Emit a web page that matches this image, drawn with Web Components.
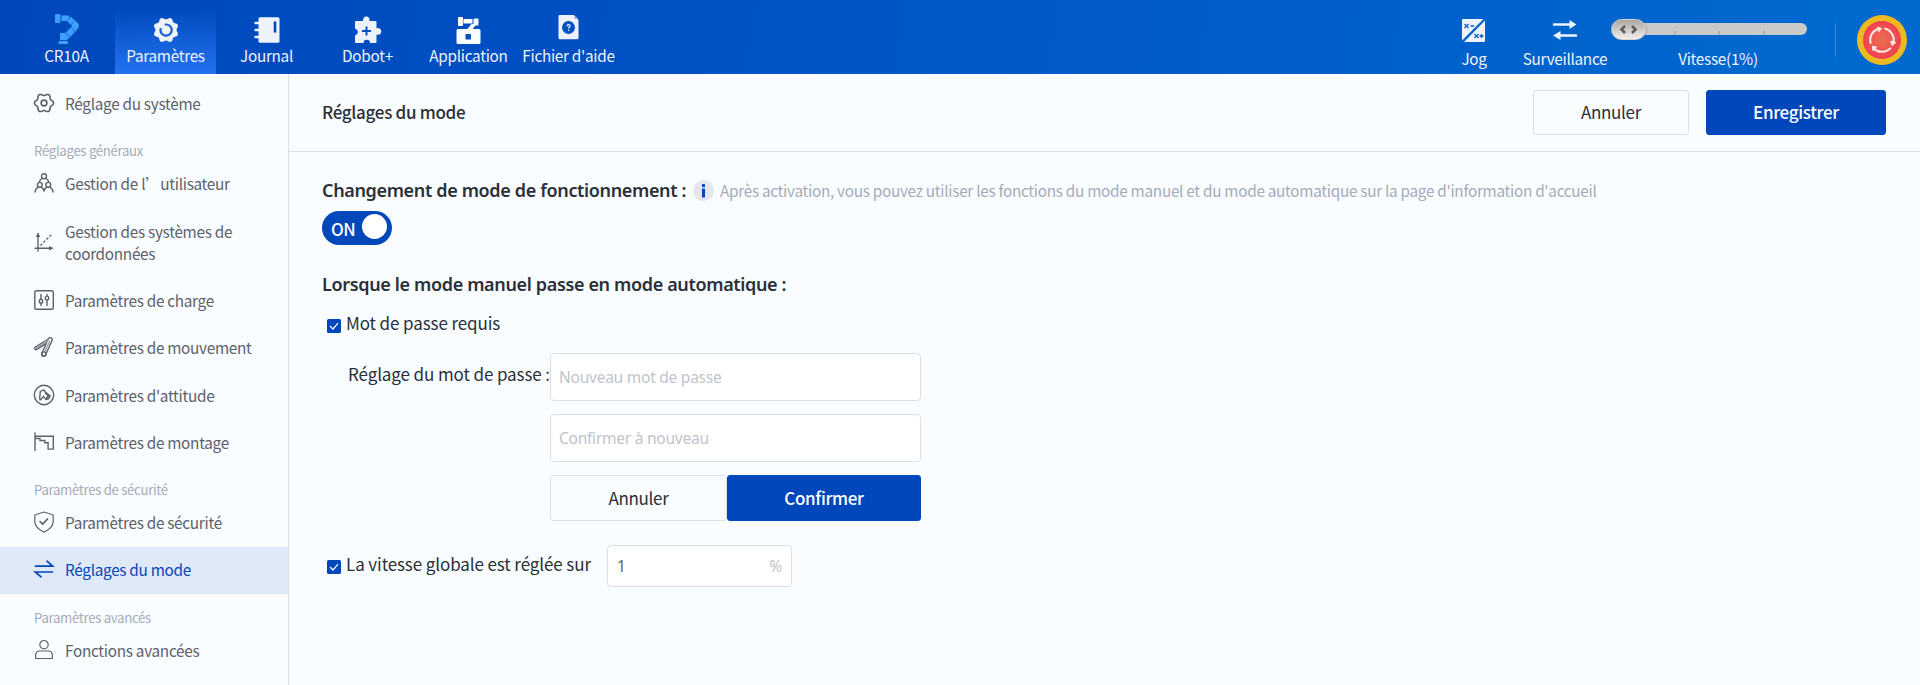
<!DOCTYPE html>
<html lang="fr">
<head>
<meta charset="utf-8">
<title>Réglages du mode</title>
<style>
html,body{margin:0;height:100%;overflow:hidden;background:#fafdff}
body{font-family:"Noto Sans CJK SC","Noto Sans",sans-serif;font-size:15.3px;letter-spacing:-.28px}
</style>
</head>
<body>
<dobot-app></dobot-app>
<script>
const define=(name,html,setup)=>{
  const t=document.createElement('template');t.innerHTML=html;
  customElements.define(name,class extends HTMLElement{
    constructor(){super();this.attachShadow({mode:'open'}).append(t.content.cloneNode(true));}
    connectedCallback(){if(setup)setup(this,this.shadowRoot);}
  });
};
const flower=(cx,cy,r,a,n,ph=0)=>{
  let d='';
  for(let i=0;i<=120;i++){const t=i/120*Math.PI*2;const R=r+a*Math.cos(n*t+ph);
    d+=(i?'L':'M')+(cx+R*Math.cos(t)).toFixed(2)+' '+(cy+R*Math.sin(t)).toFixed(2);}
  return d+'Z';
};
const W='#edf2fb';
/* header glyphs share a 32x32 box, menu glyphs a 22x22 box */
const ICONS={
robot:`<g fill="#3fa0ff"><rect x="4" y="1" width="5.500" height="9" rx="1"/><path d="M10 2.500h8v5.500h-8z"/><path d="M15 7l4-3.500 8 6.500-4 5z"/><circle cx="24.500" cy="13" r="3.400"/><path d="M21.500 13l4.500 4-10 10-5-4z"/><path d="M9 20h6.500v7H9zM8 28h8.500l.8 3H7.500z"/></g><path d="M10 1.500v8M18.300 2.500v3l-2 2M22.500 8.500l-3 4M20.500 15l3.500 4M15 20l3 4M9 27.500h7" stroke="#0d55c4" stroke-width=".8" fill="none"/>`,
gearfill:`<path d="${flower(16,17,11.700,1.150,8,Math.PI)}" fill="${W}"/><path d="M15.700 11.500a5.600 5.600 0 1 1-5.100 4.500" fill="none" stroke="#1c5ccb" stroke-width="2.200" stroke-linecap="round"/>`,
journal:`<rect x="7.500" y="4.300" width="21" height="25.500" rx="1.500" fill="${W}"/><path d="M4.500 10h5M4.500 17h5M4.500 24h5" stroke="${W}" stroke-width="2.400" stroke-linecap="round"/><path d="M24 9.500v9" stroke="#0049bd" stroke-width="2.600" stroke-linecap="round"/>`,
puzzle:`<g transform="translate(-1.500)"><path d="M5.500 8h7.200a3.300 3.300 0 1 1 6.200 0H25q1 0 1 1v6.300a3.400 3.400 0 1 1 0 6.200V29q0 1-1 1h-5.500a3.200 3.200 0 0 0-6.400 0H5.500q-1 0-1-1v-6.700a3.300 3.300 0 0 0 0-6.500V9q0-1 1-1z" fill="${W}"/><path d="M16 13.500v9M11.500 18h9" stroke="#0050c3" stroke-width="2"/></g>`,
app:`<g fill="#fafdff"><rect x="3.500" y="16" width="24" height="15" rx="1.500"/><rect x="5" y="4" width="5" height="9" rx="1"/><rect x="10.500" y="6" width="9" height="4.500"/><rect x="20.500" y="5.500" width="5" height="7" rx="1"/><path d="M18.500 11h5l-4.500 6h-5.500z"/></g><rect x="12.500" y="21" width="5.500" height="5.500" rx=".5" fill="#0050c3"/>`,
help:`<g transform="translate(-1.500)"><path d="M7.500 2h14.500l5 5v18q0 1.300-1.300 1.300H8.300Q7 26.300 7 25V3q0-1 1-1z" fill="${W}"/><path d="M23 2l4 4h-3q-1 0-1-1z" fill="#7ea5e0"/><circle cx="17" cy="14.500" r="6.500" fill="#0050c3"/><path d="M15.500 13.200q.1-1.500 1.600-1.500t1.500 1.300q0 .9-1.400 1.700v.8M17.200 16.700v1.200" fill="none" stroke="#fff" stroke-width="1.200"/></g>`,
jog:`<g transform="translate(-1)"><path d="M6 6h20.500L5 27.500V7q0-1 1-1z" fill="${W}"/><path d="M28 7.500V28q0 1-1 1H7z" fill="${W}"/><path d="M7.500 11l4 4m0-4l-4 4M13.500 13h3.500M17.500 21l4 4m0-4l-4 4M22.500 23h4M24.500 21v4" stroke="#0a5fc8" stroke-width="1.300"/></g>`,
swapfill:`<path d="M5 11.500h17M11 22.500h16" stroke="${W}" stroke-width="2.600" stroke-linecap="round"/><path d="M20.500 7l7 4.500-7 4.500zM11.500 18v9l-7.500-4.500z" fill="${W}"/>`,
gear:`<path d="${flower(11,11,8.500,1.050,6)}" stroke-width="1.600"/><circle cx="11" cy="11" r="2.900" stroke-width="1.600"/>`,
users:`<circle cx="11" cy="4.200" r="2.500"/><circle cx="6.800" cy="12.800" r="2.400"/><circle cx="15.300" cy="12.800" r="2.400"/><path d="M9 6.500Q6.500 7.800 6.300 10.400M13 6.500q2.500 1.300 2.800 3.900M5.300 15.200Q2.200 16.600 2 20M8.300 15.200Q10.500 16.500 11 19q.500-2.500 2.800-3.800M16.800 15.200q3.100 1.400 3.300 4.800"/>`,
axes:`<path d="M5 3v17M2 17.300h17"/><path d="M5 1.500L2.800 6h4.400zM20.500 17.300L16 15v4.600z" fill="#5d616d" stroke="none"/><path d="M7.500 14.500L18.500 3.500" stroke-dasharray="2.500 1.700" stroke-width="1.300" stroke-linecap="butt"/>`,
charge:`<rect x="1.800" y="1.800" width="18.500" height="18.500" rx="1.800"/><path d="M8 5.500v5M8 14v2.500M14 5.500V7M14 11v5.500"/><ellipse cx="8" cy="12.200" rx="1.700" ry="1.900"/><ellipse cx="14" cy="9" rx="1.700" ry="1.900"/>`,
motion:`<path d="M3 12.200L17 3.700" stroke-width="4.200"/><path d="M17.200 3.700L10.800 18" stroke-width="5.400"/><path d="M17.200 3.700L10.800 18" stroke="#fafdff" stroke-width="2.600"/><path d="M3 12.200L17 3.700" stroke="#fafdff" stroke-width="1.500"/><path d="M3 12.200L15.500 4.600M16.800 5L12 15.500" stroke-width=".8"/><circle cx="10.800" cy="18" r="2.200" stroke-width="1.300"/>`,
attitude:`<circle cx="11" cy="11" r="9.700"/><path d="M7 15.800q-.8-2.500 0-4.500l.3-3.800L10.500 5.800l2.500 3 4.200 3-1.500 3-3 .7-2-3.200-3 3.500z"/><path d="M12.800 9l2.800 3-1.800 2.200" fill="none" stroke-width="2"/>`,
mount:`<path d="M2 2v17.500M2 5.300h18.300v12.800h-5.200v-6.300h-3.300V9.500H7V7.500H2" stroke-linejoin="miter"/>`,
shield:`<path d="M11 1l9.200 3v6.500c0 5-4.200 8.200-9.200 10.700C6 18.700 1.800 15.500 1.800 10.500V4z" stroke-width="1.200"/><path d="M7 10.500l2.700 2.700 4.800-5.200" stroke-width="1.700"/>`,
swap:`<path d="M2.500 8.200h17.200L14 3.200M19.500 14H2.300L8 18.800" stroke-width="1.700" stroke-linejoin="miter"/>`,
user:`<circle cx="11" cy="5.700" r="4.200" stroke-width="1.200"/><path d="M2.700 19.500v-3.500q0-4 4.200-4h8.200q4.200 0 4.200 4v3.500z" stroke-width="1.200"/>`
};
define('ui-icon','<style>:host{display:block;flex:none;width:32px;height:32px}:host([line]){width:22px;height:22px}svg{display:block;width:100%;height:100%}</style><svg></svg>',(h,r)=>{
  const s=r.querySelector('svg'),l=h.hasAttribute('line');
  s.setAttribute('viewBox',l?'0 0 22 22':'0 0 32 32');
  s.innerHTML=l?`<g fill="none" stroke="currentColor" stroke-width="1.400" stroke-linecap="round" stroke-linejoin="round">${ICONS[h.getAttribute('name')]}</g>`:ICONS[h.getAttribute('name')];
});
define('nav-item',`<style>:host{display:flex;flex-direction:column;align-items:center;width:101px;height:74px;box-sizing:border-box;padding-top:13px;color:#edf2fb;line-height:20px;white-space:nowrap}
:host([active]){background:linear-gradient(#2472f000 8px,#2472f0 74px)}</style><slot name="icon"></slot><span><slot></slot></span>`);
define('speed-slider',`<style>:host{display:flex;flex-direction:column;align-items:center;color:#edf2fb;line-height:20px;width:195px}
.track{position:relative;box-sizing:border-box;width:195px;height:12px;border-radius:6px;background:#cacaca;margin:23px 0 13px;display:flex;justify-content:space-evenly;align-items:flex-end;padding:0 0 0 19px}
.track i{width:2px;height:4px;background:#b2b2b2}span{padding-left:17px}
.thumb{position:absolute;left:-1px;top:-4px;width:35px;height:21px;box-sizing:border-box;border:1px solid #d5d2cf;border-radius:11px;background:linear-gradient(#aaa5a0,#f1efed);box-shadow:1px 0 1px #8888}
svg{display:block}</style><div class="track"><i></i><i></i><i></i><div class="thumb"><svg width="33" height="19" fill="none" stroke="#5e5c5a" stroke-width="2.500"><path d="M13 6L9.500 9.500 13 13M20 6l3.500 3.500L20 13"/></svg></div></div><span><slot></slot></span>`);
define('emergency-stop',`<style>:host{display:block;width:50px;height:50px}svg{display:block}</style><svg width="50" height="50"><defs><radialGradient id="g"><stop offset="0" stop-color="#ea704f"/><stop offset=".5" stop-color="#ed5a50"/><stop offset="1" stop-color="#f03f52"/></radialGradient></defs><circle cx="25" cy="25" r="25" fill="#ecb920"/><circle cx="25" cy="25" r="19" fill="url(#g)"/><g stroke="#fbe9e6"><g id="a"><path d="M13.600 28A11.800 11.800 0 0 1 21.500 13.700" fill="none" stroke-width="2" stroke-linecap="round"/><path d="M20.500 12l4 1.500-2.700 3.300z" fill="#fbe9e6" stroke-width="1" stroke-linejoin="round"/></g><use href="#a" transform="rotate(120 25 25)"/><use href="#a" transform="rotate(240 25 25)"/></g></svg>`);
define('app-header',`<style>:host{display:flex;height:74px;flex:none;background:linear-gradient(100deg,#0047bb 0%,#0050c3 30%,#0069d0 95%)}
.nav{display:flex;padding-left:16px}.first{width:99px;padding-left:2px}.help{padding-right:2px}.right{margin-left:auto;display:flex;align-items:flex-start}
.tool ui-icon{margin-bottom:3px}
.jog{width:60px}.sv{width:90px;margin:0 2px 0 16px}.sep{width:1px;height:34px;background:#3d88da;margin:23px 21px 0 28px}
emergency-stop{margin:15px 13px 0 0}</style>
<div class="nav">
<nav-item class="first"><ui-icon slot="icon" name="robot"></ui-icon>CR10A</nav-item>
<nav-item active><ui-icon slot="icon" name="gearfill"></ui-icon>Paramètres</nav-item>
<nav-item><ui-icon slot="icon" name="journal"></ui-icon>Journal</nav-item>
<nav-item><ui-icon slot="icon" name="puzzle"></ui-icon>Dobot+</nav-item>
<nav-item><ui-icon slot="icon" name="app"></ui-icon>Application</nav-item>
<nav-item class="help"><ui-icon slot="icon" name="help"></ui-icon>Fichier d'aide</nav-item>
</div>
<div class="right">
<nav-item class="tool jog"><ui-icon slot="icon" name="jog"></ui-icon>Jog</nav-item>
<nav-item class="tool sv"><ui-icon slot="icon" name="swapfill"></ui-icon>Surveillance</nav-item>
<speed-slider>Vitesse(1%)</speed-slider><div class="sep"></div><emergency-stop></emergency-stop>
</div>`);
define('menu-label',`<style>:host{display:block;height:33.17px;box-sizing:border-box;padding:14px 0 0 34px;font-size:13.2px;letter-spacing:-.31px;line-height:20px;color:#a5abb8}</style><slot></slot>`);
const item=(i,t,a='')=>`<menu-row icon="${i}" ${a}>${t}</menu-row>`;
define('menu-row',`<style>:host{display:flex;align-items:center;box-sizing:border-box;height:47.25px;padding:0 20px 1.500px 33px;gap:10px;color:#5d616d;line-height:22px}
:host([tall]){height:69.5px}:host([active]){background:#e0e9f8;color:#0047bb}</style><span class="i"></span><span><slot></slot></span>`,(h,r)=>{
  r.querySelector('.i').innerHTML=`<ui-icon line name="${h.getAttribute('icon')}"></ui-icon>`;
});
define('side-menu',`<style>:host{display:block;width:288px;flex:none;border-right:1px solid #dcdfe6;padding-top:6px;box-sizing:content-box}</style>
${item('gear','Réglage du système')}<menu-label>Réglages généraux</menu-label>
${item('users','Gestion de l’utilisateur')}${item('axes','Gestion des systèmes de coordonnées','tall')}
${item('charge','Paramètres de charge')}${item('motion','Paramètres de mouvement')}${item('attitude',"Paramètres d'attitude")}${item('mount','Paramètres de montage')}
<menu-label>Paramètres de sécurité</menu-label>${item('shield','Paramètres de sécurité')}${item('swap','Réglages du mode','active')}
<menu-label>Paramètres avancés</menu-label>${item('user','Fonctions avancées')}`);
define('ui-button',`<style>:host{display:flex;align-items:center;justify-content:center;box-sizing:border-box;height:45px;padding-bottom:1px;border:1px solid #dcdfe6;border-radius:3px;font-size:17px;letter-spacing:-.33px;line-height:24px;color:#2a2f38}
:host([primary]){background:#0047bb;border-color:#0047bb;color:#fff;font-weight:500}</style><slot></slot>`);
define('page-header',`<style>:host{display:flex;align-items:center;height:77px;padding:0 34px 0 33px;border-bottom:1px solid #dcdfe6;color:#2a2f38;flex:none}
h1{margin:0 auto 0 0;font-size:17px;letter-spacing:-.3px;font-weight:500;line-height:24px;padding-bottom:2px}ui-button{width:156px}ui-button[primary]{width:180px;margin-left:17px}</style><h1><slot></slot></h1><ui-button>Annuler</ui-button><ui-button primary>Enregistrer</ui-button>`);
define('info-badge',`<style>:host{display:block;width:21px;height:21px;border-radius:50%;background:#e3e6ec}svg{display:block}</style><svg width="21" height="21" fill="#0047bb"><rect x="9" y="4" width="3" height="3" rx=".6"/><rect x="9" y="8.500" width="3" height="9"/></svg>`);
define('toggle-switch',`<style>:host{display:flex;box-sizing:border-box;width:70px;height:34px;border-radius:17px;background:#0047bb;color:#fff;padding:3px 5px 0 9px;justify-content:space-between}
span{font-size:17px;letter-spacing:-.5px;line-height:24px;font-weight:500;padding-top:3px}i{width:25px;height:25px;border-radius:50%;background:#fff}</style><span><slot></slot></span><i></i>`);
define('check-box',`<style>:host{display:flex;gap:5px;font-size:17px;letter-spacing:-.1px;line-height:24px;color:#2a2f38;white-space:nowrap}svg{display:block;margin-top:8px}</style><svg width="14" height="14"><rect width="14" height="14" rx="1.500" fill="#0047bb"/><path d="M3 7l3 3 5-5.800" fill="none" stroke="#fff" stroke-width="1.200"/></svg><span><slot></slot></span>`);
define('text-field',`<style>:host{display:flex;align-items:center;justify-content:space-between;box-sizing:border-box;height:48px;border:1px solid #dcdfe6;border-radius:4px;background:#fff;padding:0 9px 0 8px;color:#c0c4cc;font:15.5px/22px "Noto Sans",sans-serif;letter-spacing:-.24px}::slotted(b){font-weight:400;color:#606266;padding-left:1px}</style><slot></slot>`);
define('mode-form',`<style>:host{display:flex;flex-direction:column;align-items:flex-start;padding:25px 0 0 33px;color:#2a2f38}
h2{margin:0;font:600 18px/26px "Noto Sans",sans-serif;letter-spacing:-.35px;white-space:nowrap}
.row{display:flex;align-items:center}.a{width:365px}.hint{color:#a5abb8;line-height:22px;margin-left:6px;white-space:nowrap;padding-bottom:1px}
info-badge{margin-left:6px}toggle-switch{margin:8px 0 26px}
.c1{margin:14px 0 0 5px}
.pw{display:grid;grid-template-columns:202px 371px;margin:18px 0 0 26px;font-size:17px;letter-spacing:-.1px;line-height:24px}
.pw>span{padding-top:9px;white-space:nowrap}.stack{display:flex;flex-direction:column;gap:13px}
.stack ui-button{height:46px;width:177px}.stack ui-button[primary]{width:194px}
.sp{margin:24px 0 0 5px}.sp check-box{width:264px;margin-bottom:4px}.sp text-field{width:185px;height:42px;margin-left:16px}</style>
<div class="row"><h2 class="a">Changement de mode de fonctionnement :</h2><info-badge></info-badge><span class="hint">Après activation, vous pouvez utiliser les fonctions du mode manuel et du mode automatique sur la page d'information d'accueil</span></div>
<toggle-switch>ON</toggle-switch>
<h2>Lorsque le mode manuel passe en mode automatique :</h2>
<check-box class="c1">Mot de passe requis</check-box>
<div class="pw"><span>Réglage du mot de passe :</span><div class="stack"><text-field>Nouveau mot de passe</text-field><text-field>Confirmer à nouveau</text-field><div class="row"><ui-button>Annuler</ui-button><ui-button primary>Confirmer</ui-button></div></div></div>
<div class="row sp"><check-box>La vitesse globale est réglée sur</check-box><text-field><b>1</b><span>%</span></text-field></div>`);
define('dobot-app',`<style>:host{display:flex;flex-direction:column;height:685px;width:1920px;background:#fafdff}.body{display:flex;flex:1;min-height:0}main{flex:1;display:flex;flex-direction:column;min-width:0}</style><app-header></app-header><div class="body"><side-menu></side-menu><main><page-header>Réglages du mode</page-header><mode-form></mode-form></main></div>`);
</script>
</body>
</html>
